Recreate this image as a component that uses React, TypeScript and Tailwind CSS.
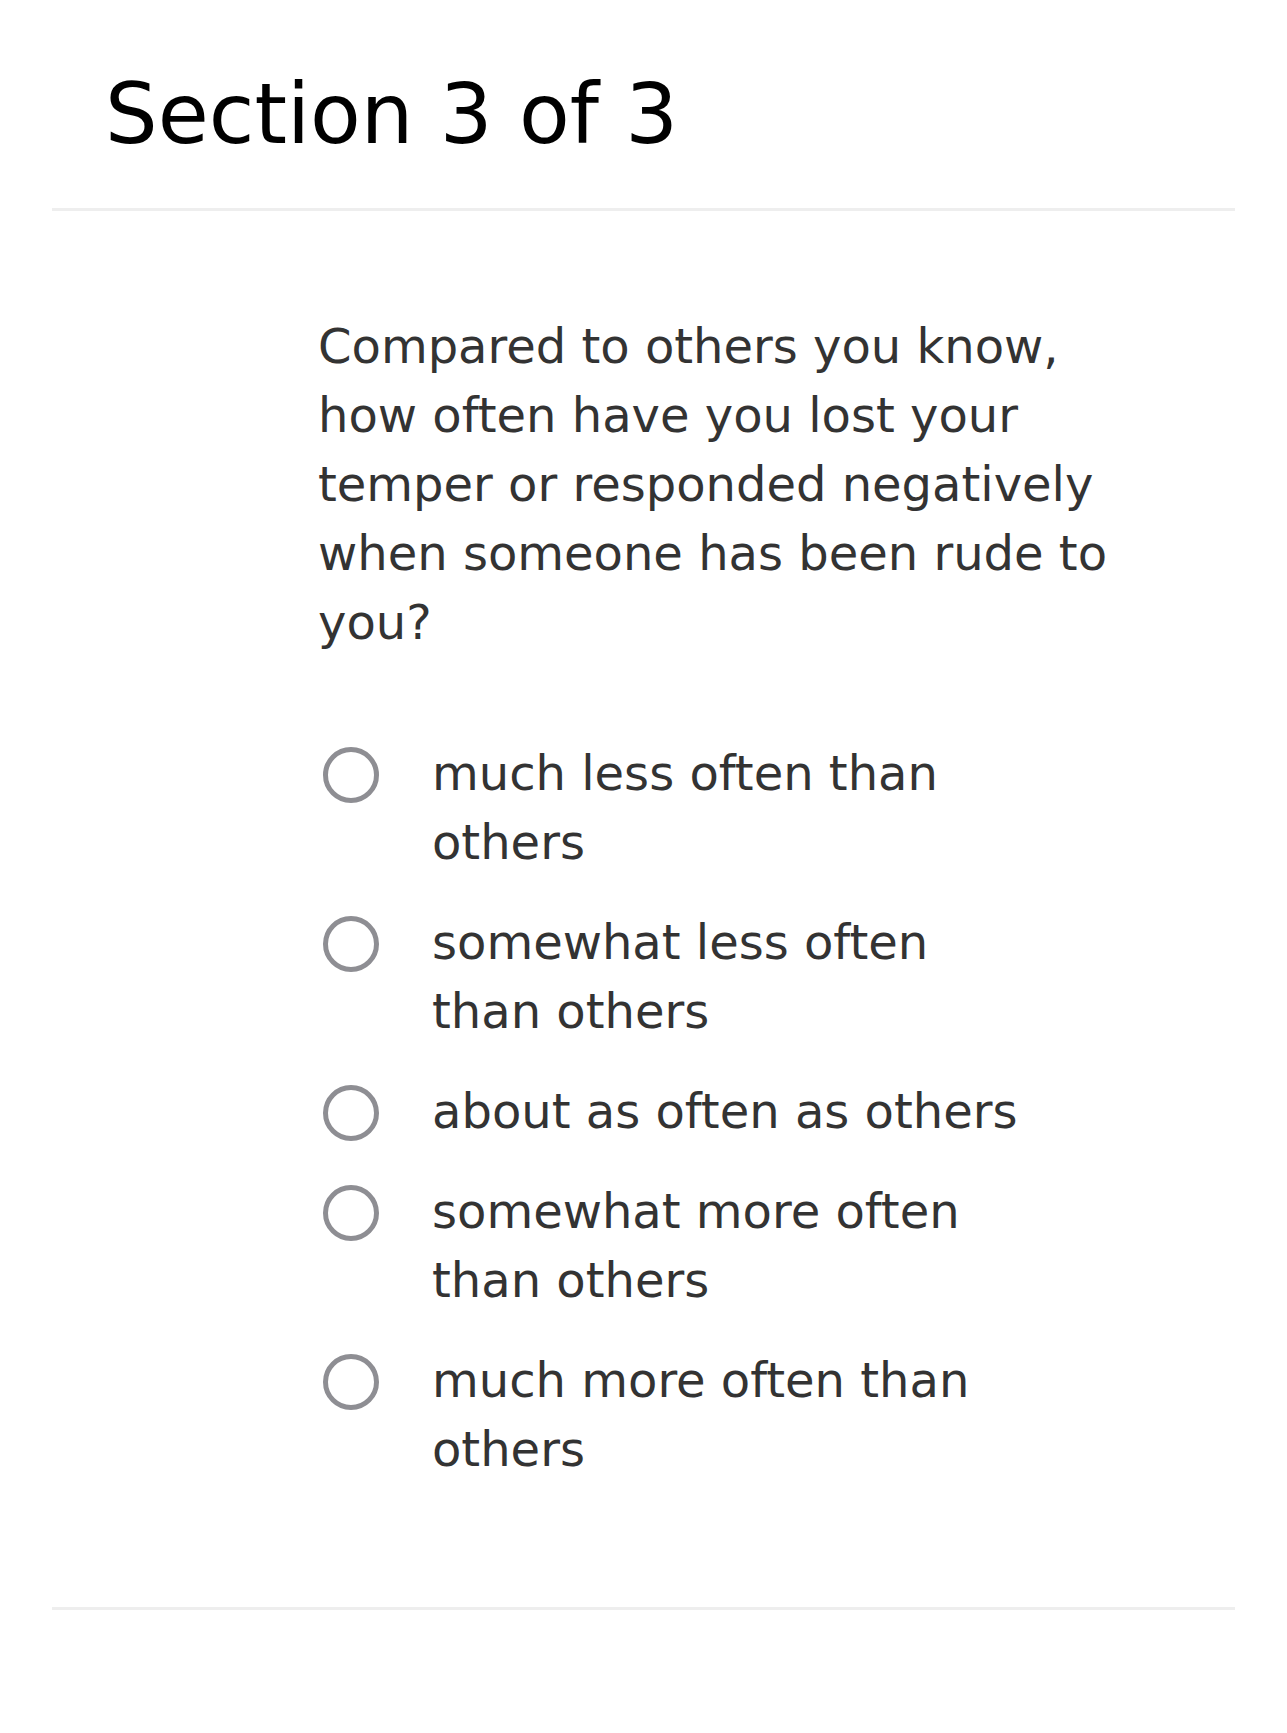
import React, { useState } from 'react';

const options = [
  'much less often than others',
  'somewhat less often than others',
  'about as often as others',
  'somewhat more often than others',
  'much more often than others',
];

const App: React.FC = () => {
  const [selected, setSelected] = useState<number | null>(null);

  return (
    <div className="min-h-[1733px] w-full bg-white font-['DejaVu_Sans',sans-serif]">
      {/* Section header */}
      <div className="pt-[73px] pl-[105px]">
        <h1 className="text-[83px] leading-[83px] font-normal text-black">Section 3 of 3</h1>
      </div>
      <div className="mx-[52px] mt-[52px] h-[3px] bg-[#eeeeee]"></div>

      {/* Question */}
      <div className="pt-[101px] pl-[318px]">
        <p className="w-[830px] text-[48px] leading-[69px] text-[#333333]">
          Compared to others you know, how often have you lost your temper or responded negatively when
          someone has been rude to you?
        </p>

        <div className="mt-[82px] flex flex-col gap-[31px]">
          {options.map((label, idx) => (
            <button
              key={idx}
              onClick={() => setSelected(idx)}
              className="flex items-start text-left"
            >
              <div className="w-[114px] shrink-0 pl-[5px] pt-[8px]">
                <div
                  className={`w-[56px] h-[56px] rounded-full border-[5px] flex items-center justify-center ${
                    selected === idx ? 'border-[#007aff]' : 'border-[#8e8e93]'
                  }`}
                >
                  {selected === idx && <div className="w-[30px] h-[30px] rounded-full bg-[#007aff]"></div>}
                </div>
              </div>
              <span className="w-[620px] text-[48px] leading-[69px] text-[#333333]">{label}</span>
            </button>
          ))}
        </div>
      </div>

      <div className="mx-[52px] mt-[123px] h-[3px] bg-[#eeeeee]"></div>
    </div>
  );
};

export default App;
